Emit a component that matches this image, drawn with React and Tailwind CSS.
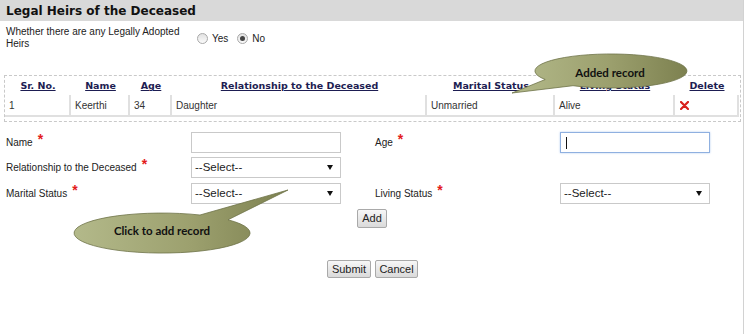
import React from "react";

function Radio({ checked }) {
  return (
    <span className="w-[11px] h-[11px] rounded-full border border-[#a9a9a9] bg-gradient-to-b from-[#e2e2e2] to-[#fafafa] flex items-center justify-center">
      {checked && <span className="w-[5px] h-[5px] rounded-full bg-[#444]" />}
    </span>
  );
}

function Label({ text }) {
  return (
    <div className="flex items-center text-[10px] text-[#222]">
      <span>{text}</span>
      <span className="ml-[5px] relative -top-[4px] text-[14px] font-bold leading-none text-[#e31b1b]">*</span>
    </div>
  );
}

function Select({ w = "w-[150px]" }) {
  return (
    <div className={`${w} h-[21px] border border-[#c9c9c9] bg-white flex items-center justify-between pl-[3px] pr-[7px]`}>
      <span className="text-[11.5px] text-[#222]">--Select--</span>
      <svg width="6" height="5" viewBox="0 0 6 5">
        <path d="M0 0 L6 0 L3 5 Z" fill="#111" />
      </svg>
    </div>
  );
}

function Btn({ children, w }) {
  return (
    <div className={`${w} h-full border border-[#a9a9a9] rounded-[2px] bg-gradient-to-b from-[#f7f7f7] to-[#dadada] flex items-center justify-center text-[11px] text-[#222]`}>
      {children}
    </div>
  );
}

const cols = [
  { h: "Sr. No.", v: "1", w: "w-[66px]" },
  { h: "Name", v: "Keerthi", w: "w-[59px]" },
  { h: "Age", v: "34", w: "w-[42px]" },
  { h: "Relationship to the Deceased", v: "Daughter", w: "w-[255px]" },
  { h: "Marital Status", v: "Unmarried", w: "w-[128px]" },
  { h: "Living Status", v: "Alive", w: "w-[120px]" },
  { h: "Delete", v: null, w: "w-[64px]" },
];

export default function App() {
  return (
    <div className="relative w-[747px] h-[334px] bg-white overflow-hidden font-['Liberation_Sans',Arial,sans-serif]">
      <div className="w-[744px] h-full border-r border-[#d2d2d2]">
        <div className="h-[21px] bg-[#d9d9d9] pl-[6px] flex items-center font-['DejaVu_Sans',Verdana,sans-serif] font-bold text-[12px] text-[#111]">
          Legal Heirs of the Deceased
        </div>

        <div className="flex items-center pl-[6px] pt-[5px]">
          <div className="w-[191px] text-[10px] leading-[12px] text-[#222]">
            Whether there are any Legally Adopted Heirs
          </div>
          <div className="flex items-center text-[10px] text-[#222]">
            <Radio />
            <span className="ml-[4px]">Yes</span>
            <span className="ml-[9px]"><Radio checked /></span>
            <span className="ml-[4px]">No</span>
          </div>
        </div>

        <div className="ml-[4px] mt-[25px] w-[737px] border border-dashed border-[#c9c9c9] pb-[4px]">
          <div className="flex h-[19px] pt-[2px] font-['DejaVu_Sans',Verdana,sans-serif] font-bold text-[9.5px] text-[#1d1d52]">
            {cols.map((c) => (
              <div key={c.h} className={`${c.w} flex items-center justify-center underline`}>
                {c.h}
              </div>
            ))}
          </div>
          <div className="flex h-[22px] text-[10px] text-[#333]">
            {cols.map((c) => (
              <div key={c.h} className={`${c.w} flex items-center pl-[4px] border-r-2 border-b-2 border-[#e0e0e0]`}>
                {c.v !== null ? (
                  c.v
                ) : (
                  <svg width="9" height="9" viewBox="0 0 9 9" className="ml-[1px]">
                    <path d="M1 1 L8 8 M8 1 L1 8" stroke="#d8201c" strokeWidth="2.2" strokeLinecap="round" />
                  </svg>
                )}
              </div>
            ))}
          </div>
        </div>

        <div className="mt-[10px] pl-[6px] flex flex-col">
          <div className="flex h-[21px] items-center">
            <div className="w-[185px]"><Label text="Name" /></div>
            <div className="w-[150px] h-[21px] border border-[#c9c9c9] bg-white" />
            <div className="w-[34px]" />
            <div className="w-[185px]"><Label text="Age" /></div>
            <div className="w-[150px] h-[21px] border border-[#8fb0e0] shadow-[0_0_2px_#b5cdf0] bg-white flex items-center pl-[5px]">
              <span className="w-[1px] h-[12px] bg-[#111]" />
            </div>
          </div>
          <div className="flex h-[21px] items-center mt-[4px]">
            <div className="w-[185px]"><Label text="Relationship to the Deceased" /></div>
            <Select />
          </div>
          <div className="flex h-[21px] items-center mt-[5px]">
            <div className="w-[185px]"><Label text="Marital Status" /></div>
            <Select />
            <div className="w-[34px]" />
            <div className="w-[185px]"><Label text="Living Status" /></div>
            <Select />
          </div>
        </div>

        <div className="flex justify-center mt-[5px] h-[19px] pl-[1px]">
          <Btn w="w-[30px]">Add</Btn>
        </div>

        <div className="flex justify-center gap-[4px] mt-[32px] h-[18px] pl-[2px]">
          <Btn w="w-[44px]">Submit</Btn>
          <Btn w="w-[43px]">Cancel</Btn>
        </div>
      </div>

      <svg className="absolute left-0 top-0 pointer-events-none" width="747" height="334" viewBox="0 0 747 334">
        <defs>
          <linearGradient id="olive" x1="0" y1="0" x2="1" y2="0">
            <stop offset="0" stopColor="#b3b98a" />
            <stop offset="0.55" stopColor="#9ca06e" />
            <stop offset="1" stopColor="#7d8150" />
          </linearGradient>
        </defs>
        <path
          d="M573 85.7 L512 93 L545.2 79.5 A76 17 0 1 1 573 85.7 Z"
          fill="url(#olive)"
          stroke="#6f7349"
          strokeWidth="0.8"
        />
        <text x="610" y="72" textAnchor="middle" dominantBaseline="central" fontFamily="Lato, 'Open Sans', sans-serif" fontWeight="bold" fontSize="11.5" fill="#111">
          Added record
        </text>
        <path
          d="M200 215 L288 190 L228 219.8 A88 20 0 1 1 200 215 Z"
          fill="url(#olive)"
          stroke="#6f7349"
          strokeWidth="0.8"
        />
        <text x="162" y="230" textAnchor="middle" dominantBaseline="central" fontFamily="Lato, 'Open Sans', sans-serif" fontWeight="bold" fontSize="11.5" fill="#111">
          Click to add record
        </text>
      </svg>
    </div>
  );
}
